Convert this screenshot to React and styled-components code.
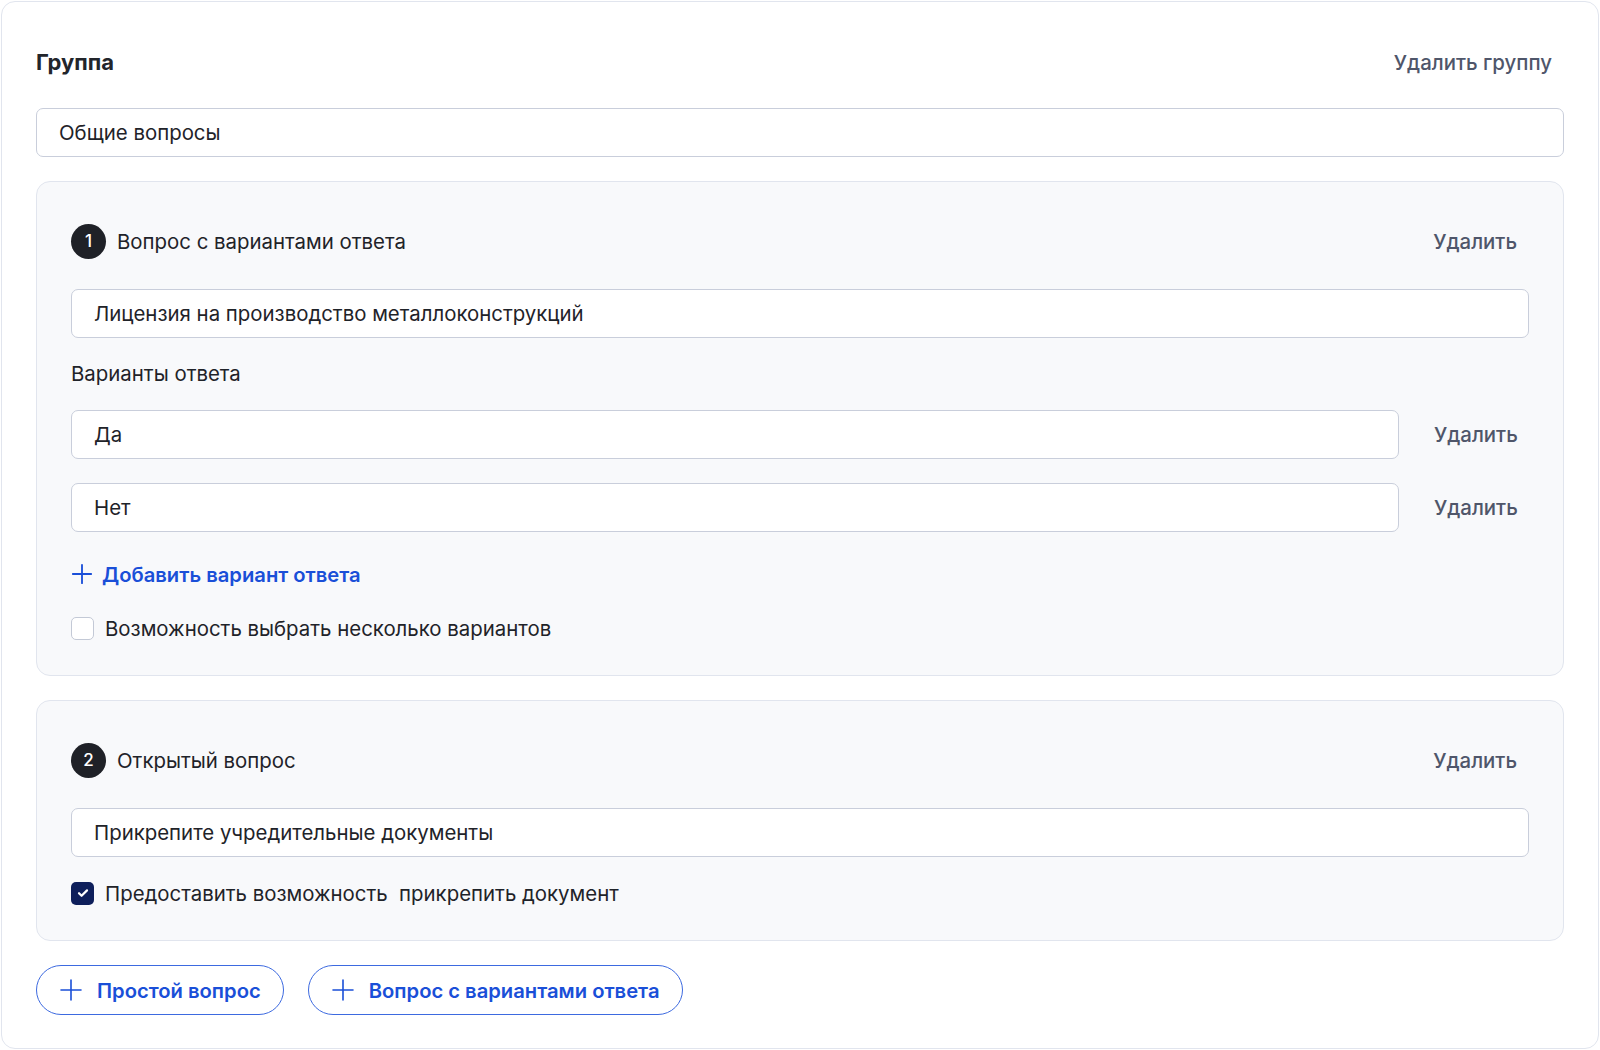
import React from "react";
import styled, { createGlobalStyle } from "styled-components";

const Global = createGlobalStyle`
  html, body { margin: 0; padding: 0; background: #ffffff; }
  body { font-family: Inter, "Noto Sans", sans-serif; color: #1f2329; }
  * { box-sizing: border-box; }
`;

const Page = styled.div`
  padding: 1px;
`;

const Card = styled.section`
  border: 1px solid #e1e5ee;
  border-radius: 14px;
  background: #fff;
  padding: 38px 34px 33px;
  display: flex;
  flex-direction: column;
  gap: 24px;
`;

const HeaderRow = styled.div`
  display: flex;
  align-items: center;
  justify-content: space-between;
  height: 48px;
  margin-top: -2px;
  margin-bottom: -2px;
`;

const Title = styled.h2`
  margin: 0;
  font-size: 22px;
  font-weight: 700;
  color: #22252b;
`;

const TextButton = styled.button`
  border: 0;
  background: transparent;
  font-family: inherit;
  font-size: 20.4px;
  font-weight: 500;
  color: #4f566a;
  padding: 0 12px;
  height: 48px;
  cursor: pointer;
  flex-shrink: 0;
`;

const Field = styled.div`
  flex: ${(p) => (p.$grow ? "1 1 auto" : "0 0 auto")};
  height: 49px;
  border: 1.5px solid #c9cedb;
  border-radius: 7px;
  background: #fff;
  display: flex;
  align-items: center;
  padding: 0 22px;
  font-size: 20.4px;
  color: #1f2329;
`;

const QuestionCard = styled.div`
  border: 1px solid #e1e5ee;
  border-radius: 14px;
  background: #f8f9fb;
  padding: 35px 34px 35px;
  display: flex;
  flex-direction: column;
  gap: 24px;
`;

const QHead = styled.div`
  display: flex;
  align-items: center;
  height: 48px;
`;

const Badge = styled.span`
  width: 35px;
  height: 35px;
  border-radius: 50%;
  background: #1f2127;
  color: #fff;
  display: inline-flex;
  align-items: center;
  justify-content: center;
  font-size: 17px;
  font-weight: 500;
  margin-right: 11px;
  flex-shrink: 0;
`;

const QTitle = styled.span`
  font-size: 20.4px;
  color: #1f2329;
  flex: 1;
`;

const Label = styled.div`
  font-size: 20.4px;
  line-height: 24px;
  color: #1f2329;
`;

const OptionRow = styled.div`
  display: flex;
  align-items: center;
  gap: 23px;
`;

const OptionDelete = styled(TextButton)`
  width: 107px;
  text-align: right;
`;

const AddLink = styled.button`
  border: 0;
  background: transparent;
  padding: 0;
  height: 36px;
  display: flex;
  align-items: center;
  gap: 9px;
  font-family: inherit;
  font-size: 20.2px;
  font-weight: 600;
  color: #1a4fd8;
  cursor: pointer;
  align-self: flex-start;
`;

const CheckRow = styled.label`
  display: flex;
  align-items: center;
  gap: 11px;
  height: 24px;
  font-size: 20.4px;
  color: #1f2329;
  white-space: pre;
`;

const Box = styled.span`
  width: 23px;
  height: 23px;
  border-radius: 5px;
  border: ${(p) => (p.$checked ? "none" : "1.5px solid #c3c9d6")};
  background: ${(p) => (p.$checked ? "#0e1f5b" : "#fff")};
  display: inline-flex;
  align-items: center;
  justify-content: center;
  flex-shrink: 0;
`;

const Actions = styled.div`
  display: flex;
  gap: 24px;
`;

const PillButton = styled.button`
  height: 50px;
  border: 1.5px solid #3d6ae0;
  border-radius: 25px;
  background: #fff;
  display: flex;
  align-items: center;
  gap: 14px;
  padding: 0 22px 0 22px;
  font-family: inherit;
  font-size: 20.2px;
  font-weight: 600;
  color: #1a4fd8;
  cursor: pointer;
`;

const Plus = ({ size = 22, stroke = 2 }) => (
  <svg width={size} height={size} viewBox="0 0 24 24" fill="none">
    <path d="M12 2v20M2 12h20" stroke="currentColor" strokeWidth={stroke} strokeLinecap="round" />
  </svg>
);

const Check = () => (
  <svg width="14" height="14" viewBox="0 0 14 14" fill="none">
    <path d="M3 7.2l2.6 2.6L11 4.4" stroke="#fff" strokeWidth="2.2" strokeLinecap="round" strokeLinejoin="round" />
  </svg>
);

export default function App() {
  return (
    <Page>
      <Global />
      <Card>
        <HeaderRow>
          <Title>Группа</Title>
          <TextButton>Удалить группу</TextButton>
        </HeaderRow>
        <Field>Общие вопросы</Field>

        <QuestionCard>
          <QHead>
            <Badge>1</Badge>
            <QTitle>Вопрос с вариантами ответа</QTitle>
            <TextButton>Удалить</TextButton>
          </QHead>
          <Field>Лицензия на производство металлоконструкций</Field>
          <Label>Варианты ответа</Label>
          <OptionRow>
            <Field $grow>Да</Field>
            <OptionDelete>Удалить</OptionDelete>
          </OptionRow>
          <OptionRow>
            <Field $grow>Нет</Field>
            <OptionDelete>Удалить</OptionDelete>
          </OptionRow>
          <AddLink>
            <Plus size={22} stroke={2} />
            Добавить вариант ответа
          </AddLink>
          <CheckRow>
            <Box />
            Возможность выбрать несколько вариантов
          </CheckRow>
        </QuestionCard>

        <QuestionCard>
          <QHead>
            <Badge>2</Badge>
            <QTitle>Открытый вопрос</QTitle>
            <TextButton>Удалить</TextButton>
          </QHead>
          <Field>Прикрепите учредительные документы</Field>
          <CheckRow>
            <Box $checked>
              <Check />
            </Box>
            {"Предоставить возможность  прикрепить документ"}
          </CheckRow>
        </QuestionCard>

        <Actions>
          <PillButton>
            <Plus size={24} stroke={1.6} />
            Простой вопрос
          </PillButton>
          <PillButton>
            <Plus size={24} stroke={1.6} />
            Вопрос с вариантами ответа
          </PillButton>
        </Actions>
      </Card>
    </Page>
  );
}
